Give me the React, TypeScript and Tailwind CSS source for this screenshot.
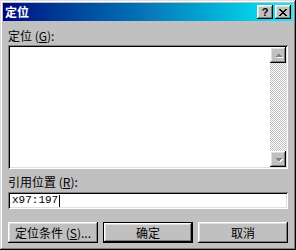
import React from "react";

const raised =
  "shadow-[inset_-1px_-1px_#000,inset_1px_1px_#fff,inset_-2px_-2px_#808080,inset_2px_2px_#dfdfdf]";
const sunken =
  "shadow-[inset_1px_1px_#808080,inset_-1px_-1px_#fff,inset_2px_2px_#000,inset_-2px_-2px_#dfdfdf]";

function Arrow({ down }: { down?: boolean }) {
  return (
    <svg width="16" height="16" viewBox="0 0 16 16" shapeRendering="crispEdges">
      {down ? (
        <>
          <polygon points="5,7 12,7 8.5,10.5" fill="#fff" transform="translate(1,1)" />
          <polygon points="5,7 12,7 8.5,10.5" fill="#808080" />
        </>
      ) : (
        <>
          <polygon points="5,10 12,10 8.5,6.5" fill="#fff" transform="translate(1,1)" />
          <polygon points="5,10 12,10 8.5,6.5" fill="#808080" />
        </>
      )}
    </svg>
  );
}

export default function App() {
  return (
    <div
      className={`w-[296px] h-[250px] bg-[#c0c0c0] p-[3px] flex flex-col text-black text-[12px] font-['Noto_Sans_CJK_SC','Liberation_Sans',sans-serif] shadow-[inset_-1px_-1px_#000,inset_1px_1px_#dfdfdf,inset_-2px_-2px_#808080,inset_2px_2px_#fff]`}
    >
      <div className="h-[18px] flex items-center bg-linear-to-r from-[#000080] via-[#0878b8] to-[#10f0f8] pl-[2px] pr-[2px]">
        <span className="flex-1 text-white font-bold text-[12px] leading-none">定位</span>
        <div className="flex gap-[2px]">
          <div className={`w-[16px] h-[14px] bg-[#c0c0c0] ${raised} flex items-center justify-center text-[11px] font-bold leading-none font-['Liberation_Sans',sans-serif]`}>
            ?
          </div>
          <div className={`w-[16px] h-[14px] bg-[#c0c0c0] ${raised} flex items-center justify-center`}>
            <svg width="8" height="7" viewBox="0 0 8 7" shapeRendering="crispEdges">
              <path d="M0 0h2v1h-2zM6 0h2v1h-2zM1 1h2v1h-2zM5 1h2v1h-2zM2 2h4v1h-4zM3 3h2v1h-2zM2 4h4v1h-4zM1 5h2v1h-2zM5 5h2v1h-2zM0 6h2v1h-2zM6 6h2v1h-2z" fill="#000" />
            </svg>
          </div>
        </div>
      </div>

      <div className="flex flex-col px-[5px]">
        <div className="mt-[7px] h-[16px] leading-[16px]">
          定位 (<u>G</u>):
        </div>
        <div className={`mt-[1px] h-[124px] flex bg-white p-[2px] ${sunken}`}>
          <div className="flex-1" />
          <div className="w-[16px] flex flex-col">
            <div className={`w-[16px] h-[16px] bg-[#c0c0c0] ${raised}`}>
              <Arrow />
            </div>
            <div className="flex-1 bg-[repeating-conic-gradient(#c0c0c0_0_25%,#fff_0_50%)] bg-[length:2px_2px]" />
            <div className={`w-[16px] h-[16px] bg-[#c0c0c0] ${raised}`}>
              <Arrow down />
            </div>
          </div>
        </div>

        <div className="mt-[5px] h-[16px] leading-[16px]">
          引用位置 (<u>R</u>):
        </div>
        <div className={`mt-[2px] h-[17px] flex items-center bg-white pl-[4px] ${sunken}`}>
          <span className="font-['Liberation_Mono',monospace] text-[11px] leading-none">x97:197</span>
          <span className="ml-[1px] w-[1px] h-[12px] bg-black" />
        </div>

        <div className="mt-[13px] flex gap-[5px]">
          <div className={`w-[90px] h-[21px] flex items-center justify-center bg-[#c0c0c0] ${raised}`}>
            定位条件 (<u>S</u>)...
          </div>
          <div className="w-[90px] h-[21px] border border-black">
            <div className={`w-full h-full flex items-center justify-center bg-[#c0c0c0] ${raised}`}>
              确定
            </div>
          </div>
          <div className={`w-[90px] h-[21px] flex items-center justify-center bg-[#c0c0c0] ${raised}`}>
            取消
          </div>
        </div>
      </div>
    </div>
  );
}
